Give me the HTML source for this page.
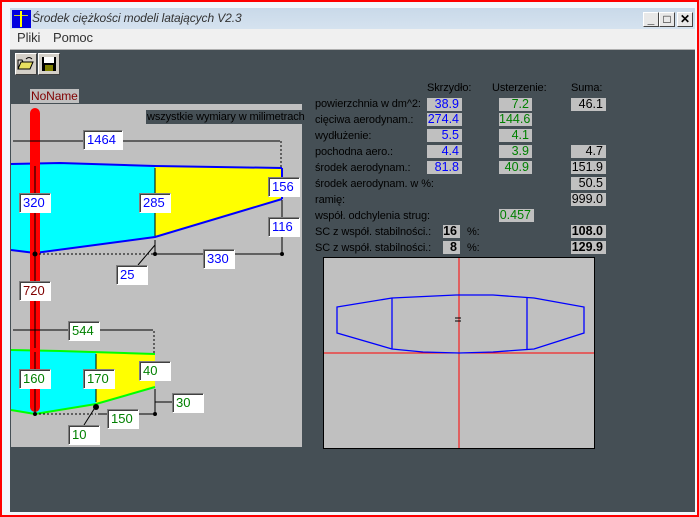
<!DOCTYPE html>
<html><head><meta charset="utf-8"><style>
*{margin:0;padding:0;box-sizing:border-box}
body{width:699px;height:517px;position:relative;overflow:hidden;background:#f4f7fb;font-family:"Liberation Sans",sans-serif;font-size:12px}
.a{position:absolute}
.frame{position:absolute;left:0;top:0;width:699px;height:517px;border:2px solid #f00;pointer-events:none}
.title{left:10px;top:8px;width:685px;height:21px;background:linear-gradient(#c9d9e9,#d5e2ef)}
.menu{left:10px;top:29px;width:685px;height:21px;background:#f0f0f0;border-bottom:1px solid #b0b0b0}
.content{left:10px;top:50px;width:685px;height:462px;background:#454f55}
.wb{width:16px;height:15px;background:#e8e8e8;border:1px solid;border-color:#fff #444 #444 #fff;font-size:12px;text-align:center;line-height:13px;font-weight:bold}
.lab{position:absolute;color:#000;font-size:11px;line-height:14px;white-space:nowrap;letter-spacing:-0.1px}
.v{position:absolute;background:#c0c0c0;height:13px;line-height:13px;text-align:right;padding-right:3px;font-size:12.5px}
.b{color:#0000ff}.g{color:#008000}.k{color:#000}
.bx{position:absolute;background:#fff;border:1px solid;border-color:#808080 #fff #fff #808080;box-shadow:inset 1px 1px 0 #404040;font-size:13px;line-height:18px;padding-left:3px;height:20px;width:32px}
</style></head><body>
<div class="a title"></div>
<div class="a" style="left:12px;top:10px;width:19px;height:18px;background:#0000e0"><div class="a" style="left:8px;top:1px;width:2px;height:16px;background:#ff0"></div><div class="a" style="left:2px;top:5px;width:14px;height:1px;background:#ff0;opacity:.8"></div></div>
<div class="lab" style="left:32px;top:11px;font-style:italic;font-size:12px;color:#333">Środek ciężkości modeli latających V2.3</div>
<div class="a wb" style="left:643px;top:12px">_</div>
<div class="a wb" style="left:659px;top:12px">□</div>
<div class="a wb" style="left:677px;top:12px">✕</div>
<div class="a menu"></div>
<div class="lab" style="left:17px;top:31px;font-size:13px;color:#333">Pliki</div>
<div class="lab" style="left:53px;top:31px;font-size:13px;color:#333">Pomoc</div>
<div class="a content"></div>
<div class="a" style="left:15px;top:53px;width:22px;height:22px;background:#d4d0c8;border:1px solid;border-color:#fff #404040 #404040 #fff"><svg width="20" height="20"><path d="M2 15 L5 8 H17 L14 15Z" fill="#e8e060" stroke="#000"/><path d="M2 15V6h4l1 2" fill="none" stroke="#000"/><path d="M10 5 q3-3 6 0" fill="none" stroke="#000"/></svg></div>
<div class="a" style="left:38px;top:53px;width:22px;height:22px;background:#d4d0c8;border:1px solid;border-color:#fff #404040 #404040 #fff"><svg width="20" height="20"><rect x="3" y="3" width="14" height="14" fill="#000"/><rect x="5" y="3" width="10" height="6" fill="#fff"/><rect x="6" y="11" width="8" height="6" fill="#808000"/></svg></div>
<div class="lab" style="left:30px;top:89px;background:#c0c0c0;color:#800000;font-size:12px;padding:0 1px">NoName</div>
<div class="a" style="left:11px;top:104px;width:291px;height:343px;background:#c0c0c0"></div>
<div class="lab" style="left:146px;top:110px;background:#454f55;color:#000;padding:0 1px">wszystkie wymiary w milimetrach</div>
<svg class="a" style="left:0;top:0" width="310" height="460">
<polygon points="11,164 60,163 155,166 282,168 282,199 155,237 35,253 11,250" fill="#0ff"/>
<polygon points="155,166 282,168 282,199 155,237" fill="#ff0"/>
<polyline points="11,164 60,163 155,166 282,168" fill="none" stroke="#00f" stroke-width="2"/>
<polyline points="282,199 155,237 35,253 11,250" fill="none" stroke="#00f" stroke-width="2"/>
<line x1="282" y1="168" x2="282" y2="199" stroke="#00f" stroke-width="2"/>
<polygon points="11,350 60,351 155,354 155,387 96,404 35,414 11,410" fill="#0ff"/>
<polygon points="96,352 155,354 155,387 96,404" fill="#ff0"/>
<polyline points="11,350 60,351 155,354" fill="none" stroke="#0f0" stroke-width="2"/>
<polyline points="155,387 96,404 35,414 11,410" fill="none" stroke="#0f0" stroke-width="2"/>
<rect x="30" y="108" width="10" height="304" rx="5" fill="#f00"/>
<g stroke="#000" fill="none" stroke-width="1">
<line x1="13" y1="141" x2="280" y2="141"/><line x1="281" y1="141" x2="281" y2="168" stroke-dasharray="2,2"/>
<line x1="35" y1="166" x2="35" y2="252"/><line x1="155" y1="168" x2="155" y2="236"/>
<line x1="282" y1="200" x2="282" y2="254"/><line x1="157" y1="254" x2="280" y2="254"/>
<line x1="35" y1="254" x2="155" y2="254" stroke-dasharray="2,2"/>
<line x1="155" y1="240" x2="155" y2="254"/><line x1="155" y1="245" x2="138" y2="265"/>
<line x1="35" y1="256" x2="35" y2="348"/>
<line x1="13" y1="330" x2="153" y2="330"/><line x1="154" y1="331" x2="154" y2="353" stroke-dasharray="2,2"/>
<line x1="35" y1="352" x2="35" y2="412"/><line x1="96" y1="354" x2="96" y2="402"/>
<line x1="155" y1="389" x2="155" y2="414"/><line x1="155" y1="402" x2="172" y2="402"/>
<line x1="98" y1="414" x2="153" y2="414"/><line x1="35" y1="414" x2="96" y2="414" stroke-dasharray="2,2"/>
<line x1="96" y1="406" x2="84" y2="425"/>
</g>
<g fill="#000"><circle cx="35" cy="254" r="2.5"/><circle cx="155" cy="254" r="2"/><circle cx="282" cy="254" r="2"/><circle cx="96" cy="407" r="3"/><circle cx="155" cy="414" r="2"/><circle cx="35" cy="414" r="2"/></g>
</svg>
<div class="bx b" style="left:83px;top:130px;width:40px">1464</div>
<div class="bx b" style="left:19px;top:193px">320</div>
<div class="bx b" style="left:139px;top:193px">285</div>
<div class="bx b" style="left:268px;top:177px">156</div>
<div class="bx b" style="left:268px;top:217px">116</div>
<div class="bx b" style="left:203px;top:249px">330</div>
<div class="bx b" style="left:116px;top:265px">25</div>
<div class="bx" style="left:19px;top:281px;color:#800000">720</div>
<div class="bx g" style="left:68px;top:321px">544</div>
<div class="bx g" style="left:19px;top:369px">160</div>
<div class="bx g" style="left:83px;top:369px">170</div>
<div class="bx g" style="left:139px;top:361px">40</div>
<div class="bx g" style="left:172px;top:393px">30</div>
<div class="bx g" style="left:107px;top:409px">150</div>
<div class="bx g" style="left:68px;top:425px">10</div>

<div class="lab" style="left:427px;top:81px">Skrzydło:</div>
<div class="lab" style="left:492px;top:81px">Usterzenie:</div>
<div class="lab" style="left:571px;top:81px">Suma:</div>
<div class="lab" style="left:315px;top:97px">powierzchnia w dm^2:</div>
<div class="lab" style="left:315px;top:113px">cięciwa aerodynam.:</div>
<div class="lab" style="left:315px;top:129px">wydłużenie:</div>
<div class="lab" style="left:315px;top:145px">pochodna aero.:</div>
<div class="lab" style="left:315px;top:161px">środek aerodynam.:</div>
<div class="lab" style="left:315px;top:177px">środek aerodynam. w %:</div>
<div class="lab" style="left:315px;top:193px">ramię:</div>
<div class="lab" style="left:315px;top:209px">współ. odchylenia strug:</div>
<div class="lab" style="left:315px;top:225px">SC z współ. stabilności.:</div>
<div class="lab" style="left:315px;top:241px">SC z współ. stabilności.:</div>
<div class="v b" style="left:427px;top:98px;width:35px">38.9</div>
<div class="v b" style="left:427px;top:113px;width:35px">274.4</div>
<div class="v b" style="left:427px;top:129px;width:35px">5.5</div>
<div class="v b" style="left:427px;top:145px;width:35px">4.4</div>
<div class="v b" style="left:427px;top:161px;width:35px">81.8</div>
<div class="v g" style="left:499px;top:98px;width:33px">7.2</div>
<div class="v g" style="left:499px;top:113px;width:33px">144.6</div>
<div class="v g" style="left:499px;top:129px;width:33px">4.1</div>
<div class="v g" style="left:499px;top:145px;width:33px">3.9</div>
<div class="v g" style="left:499px;top:161px;width:33px">40.9</div>
<div class="v g" style="left:499px;top:209px;width:35px">0.457</div>
<div class="v k" style="left:571px;top:98px;width:35px">46.1</div>
<div class="v k" style="left:571px;top:145px;width:35px">4.7</div>
<div class="v k" style="left:571px;top:161px;width:35px">151.9</div>
<div class="v k" style="left:571px;top:177px;width:35px">50.5</div>
<div class="v k" style="left:571px;top:193px;width:35px">999.0</div>
<div class="v k" style="left:571px;top:225px;width:35px;font-weight:bold">108.0</div>
<div class="v k" style="left:571px;top:241px;width:35px;font-weight:bold">129.9</div>
<div class="v k" style="left:443px;top:225px;width:17px;font-weight:bold">16</div>
<div class="v k" style="left:443px;top:241px;width:17px;font-weight:bold">8</div>
<div class="lab" style="left:467px;top:225px">%:</div>
<div class="lab" style="left:467px;top:241px">%:</div>

<div class="a" style="left:323px;top:257px;width:272px;height:192px;background:#c0c0c0;border:1px solid #000"></div>
<svg class="a" style="left:323px;top:257px" width="272" height="192">
<line x1="136" y1="1" x2="136" y2="191" stroke="#f00"/>
<line x1="1" y1="96" x2="271" y2="96" stroke="#f00"/>
<polygon points="14,50 69,41 133,38 170,38 211,41 261,50 261,76 211,92 170,95 136,96 100,95 69,92 14,76" fill="none" stroke="#00f" stroke-width="1.3"/>
<line x1="69" y1="41" x2="69" y2="92" stroke="#00f" stroke-width="1.3"/>
<line x1="204" y1="40" x2="204" y2="92" stroke="#00f" stroke-width="1.3"/>
<path d="M132 61h6M132 64h6" stroke="#000"/>
</svg>
<div class="frame"></div>
</body></html>
